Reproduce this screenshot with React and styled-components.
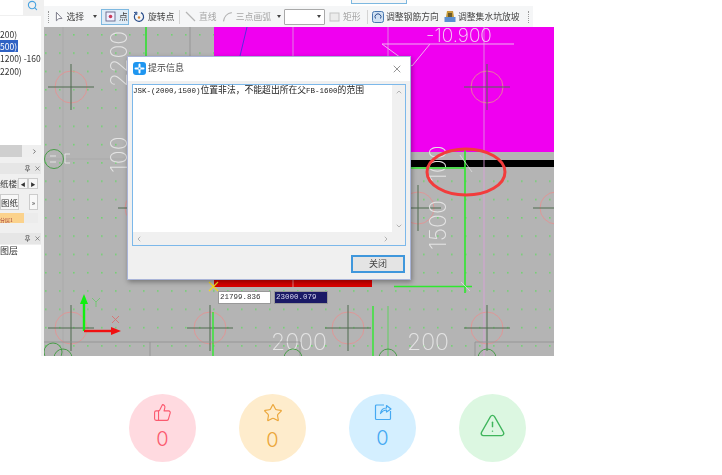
import React from 'react';
import styled, { createGlobalStyle } from 'styled-components';
import { ThumbsUp, Star, TriangleAlert, X, ChevronUp, ChevronDown, ChevronLeft, ChevronRight, Search, Pin } from 'lucide-react';

const GlobalStyle = createGlobalStyle`
  html, body { margin: 0; padding: 0; background: #fff; }
  body { font-family: "Noto Sans CJK SC", "Liberation Sans", sans-serif; }
`;

const Page = styled.div`
  width: 722px;
  height: 475px;
  overflow: hidden;
`;

const Shot = styled.div`
  width: 554px;
  height: 356px;
  display: flex;
  overflow: hidden;
  background: #f0f0f0;
  filter: blur(0.45px);
`;

/* left dock */
const Sidebar = styled.div`
  width: 44px;
  flex: none;
  display: flex;
  flex-direction: column;
  font-size: 9px;
  color: #333;
  overflow: hidden;
`;

const SearchRow = styled.div`
  height: 16px;
  display: flex;
  align-items: flex-start;
  color: #4aa3e0;
`;

const SearchBox = styled.div`
  width: 23px;
  height: 15px;
  background: #fff;
  margin-right: 4px;
`;

const TreeList = styled.div`
  width: 41px;
  height: 141px;
  background: #fff;
  padding-top: 12px;
  box-sizing: border-box;
  position: relative;
`;

const TreeItem = styled.div`
  height: 12.2px;
  line-height: 12px;
  white-space: nowrap;
  overflow: hidden;
  font-size: 8.5px;
`;

const TreeLabel = styled.span`
  display: inline-block;
  background: ${(p) => (p.$selected ? '#2f62c4' : 'transparent')};
  color: ${(p) => (p.$selected ? '#fff' : '#333')};
  padding-right: 1px;
`;

const TreeScroll = styled.div`
  position: absolute;
  left: 0;
  right: 0;
  bottom: 0;
  height: 12px;
  background: linear-gradient(to right, #cfcfcf 0 22px, #efefef 22px);
  display: flex;
  justify-content: flex-end;
  align-items: center;
  color: #666;
  padding-right: 3px;
`;

const DockHeader = styled.div`
  height: 11px;
  margin-top: ${(p) => p.$top}px;
  width: 41px;
  display: flex;
  justify-content: flex-end;
  align-items: center;
  gap: 3px;
  background: #e6e6e6;
  color: #555;
`;

const TabRow = styled.div`
  display: flex;
  align-items: center;
  width: 41px;
  height: 12px;
  margin-top: 3px;
  white-space: nowrap;
  font-size: 8.5px;
`;

const TabLabel = styled.span`
  width: 18px;
  overflow: hidden;
  flex: none;
`;

const ArrowBtn = styled.span`
  width: 10px;
  height: 11px;
  background: #f6f6f6;
  border: 1px solid #ccc;
  box-sizing: border-box;
  font-size: 5px;
  line-height: 9px;
  text-align: center;
`;

const SheetRow = styled.div`
  display: flex;
  justify-content: space-between;
  width: 38px;
  height: 16px;
  margin-top: 5px;
`;

const SheetBtn = styled.span`
  width: ${(p) => p.$w}px;
  height: 16px;
  line-height: 15px;
  background: #f8f8f8;
  border: 1px solid #ccc;
  box-sizing: border-box;
  font-size: ${(p) => p.$size || 8.5}px;
  text-align: center;
  overflow: hidden;
`;

const SheetBar = styled.div`
  width: 38px;
  height: 10px;
  margin-top: 3px;
  background: linear-gradient(to right, #fbd28c 0 24px, #ececec 24px);
  color: #a23a3a;
  font-size: 5px;
  line-height: 14px;
  overflow: hidden;
  white-space: nowrap;
`;

const LayerPanel = styled.div`
  flex: 1;
  width: 41px;
  background: #fff;
  margin-top: 1px;
  font-size: 9px;
  line-height: 12px;
`;

/* right side */
const Main = styled.div`
  flex: 1;
  display: flex;
  flex-direction: column;
  min-width: 0;
`;

const TopStrip = styled.div`
  height: 6px;
  display: flex;
  justify-content: flex-end;
  background: #fff;
  padding-right: 147px;
`;

const StripTab = styled.div`
  width: 54px;
  height: 3px;
  border: 1px solid #7db8e0;
  border-top: none;
  background: #f6f6f6;
`;

const Toolbar = styled.div`
  height: 21px;
  display: flex;
  align-items: center;
  background: #f5f6f7;
  font-size: 8.8px;
  color: #444;
  white-space: nowrap;
`;

const Grip = styled.span`
  width: 1px;
  height: 12px;
  margin: ${(p) => p.$margin || '0'};
  border-left: 1px dotted #999;
`;

const ToolbarEnd = styled.span`
  flex: 1;
  align-self: stretch;
  margin-left: 3px;
  background: #fff;
`;

const ToolItem = styled.div`
  display: flex;
  align-items: center;
  gap: ${(p) => p.$gap ?? 3}px;
  width: ${(p) => p.$w}px;
  margin-left: ${(p) => p.$left || 0}px;
  flex: none;
  color: ${(p) => (p.$dim ? '#a6a6a6' : '#444')};
`;

const ActiveTool = styled(ToolItem)`
  height: 16px;
  box-sizing: border-box;
  border: 1px solid #7db8e0;
  background: #dfecf7;
  padding-left: 3px;
`;

const Caret = styled.span`
  width: 0;
  height: 0;
  border-left: 2.5px solid transparent;
  border-right: 2.5px solid transparent;
  border-top: 3px solid #444;
  margin: ${(p) => p.$margin};
`;

const Separator = styled.span`
  width: 1px;
  height: 14px;
  background: #d4d4d4;
  margin: ${(p) => p.$margin};
`;

const ComboBox = styled.div`
  width: 41px;
  height: 16px;
  box-sizing: border-box;
  border: 1px solid #a9a9a9;
  border-radius: 1px;
  background: #fff;
  display: flex;
  justify-content: flex-end;
  align-items: center;
  padding-right: 3px;
  margin-right: 4px;
  flex: none;
`;

const Canvas = styled.div`
  position: relative;
  flex: 1;
  background: #b4b4b4;
  overflow: hidden;
`;

const Drawing = styled.svg`
  display: block;
  width: 510px;
  height: 329px;
`;

const CoordBox = styled.div`
  position: absolute;
  top: 264px;
  left: ${(p) => p.$left}px;
  width: ${(p) => p.$w}px;
  height: 13px;
  box-sizing: border-box;
  background: ${(p) => (p.$dark ? '#1a1a66' : '#fff')};
  color: ${(p) => (p.$dark ? '#d8d8f0' : '#333')};
  border: 1px solid #999;
  font-family: "Liberation Mono", monospace;
  font-size: 7.5px;
  line-height: 11px;
  padding-left: 1px;
  overflow: hidden;
`;

/* message dialog */
const Dialog = styled.div`
  position: absolute;
  left: 83px;
  top: 29px;
  width: 284px;
  height: 224px;
  box-sizing: border-box;
  background: #f0f0f0;
  border: 1px solid #a9b4d8;
  box-shadow: 1px 2px 5px rgba(0, 0, 0, 0.35);
  display: flex;
  flex-direction: column;
`;

const TitleBar = styled.div`
  height: 24px;
  flex: none;
  background: #fff;
  display: flex;
  align-items: center;
  padding: 0 7px 1px 5px;
  box-sizing: border-box;
  gap: 2px;
  font-size: 9px;
  color: #444;
`;

const TitleText = styled.span`
  flex: 1;
  line-height: 11px;
  margin-bottom: 2px;
`;

const MessageBox = styled.div`
  margin: 3px 4px 0 4px;
  height: 162px;
  flex: none;
  box-sizing: border-box;
  border: 1px solid #7cb8ea;
  background: #fff;
  display: grid;
  grid-template-columns: 1fr 13px;
  grid-template-rows: 1fr 13px;
`;

const MessageText = styled.div`
  font-size: 8.8px;
  line-height: 10px;
  color: #222;
  white-space: nowrap;
`;

const Latin = styled.span`
  font-family: "Liberation Mono", monospace;
  font-size: 7.5px;
`;

const VScroll = styled.div`
  background: #f0f0f0;
  color: #a6a6a6;
  display: flex;
  flex-direction: column;
  justify-content: space-between;
  align-items: center;
  padding: 3px 0 2px;
`;

const HScroll = styled.div`
  background: #f0f0f0;
  color: #a6a6a6;
  display: flex;
  justify-content: space-between;
  align-items: center;
  padding: 0 2px;
`;

const Corner = styled.div`
  background: #f0f0f0;
`;

const DialogFooter = styled.div`
  flex: 1;
  display: flex;
  justify-content: flex-end;
  align-items: flex-start;
  padding: 9px 5px 0 0;
`;

const CloseButton = styled.div`
  width: 54px;
  height: 18px;
  box-sizing: border-box;
  border: 2px solid #3f97dc;
  background: #e4e4e4;
  font-size: 9px;
  line-height: 14px;
  text-align: center;
  color: #444;
`;

/* reaction buttons under the picture */
const Reactions = styled.div`
  display: flex;
  gap: 43px;
  padding: 38px 0 0 129px;
`;

const Bubble = styled.div`
  width: 67px;
  height: 68px;
  border-radius: 50%;
  background: ${(p) => p.$bg};
  color: ${(p) => p.$fg};
  display: flex;
  flex-direction: column;
  align-items: center;
  justify-content: ${(p) => (p.$single ? 'center' : 'flex-start')};
  padding: ${(p) => (p.$single ? '0 0 6px' : '9px 0 0')};
  box-sizing: border-box;
`;

const Count = styled.span`
  font-family: Inter, "Liberation Sans", sans-serif;
  font-weight: 300;
  font-size: 20px;
  line-height: 24px;
  margin-top: 5px;
`;

const crosshairs = [
  [71, 87], [487, 87], [141, 208], [418, 208], [556, 208],
  [71, 328], [210, 328], [348, 328], [487, 328],
];

const Crosshair = ({ x, y }) => (
  <g fill="none">
    <circle cx={x} cy={y} r="16" stroke="#e88f8f" strokeWidth="0.8" />
    <path d={`M${x - 23} ${y}H${x + 23}M${x} ${y - 23}V${y + 23}`} stroke="#4f6a4f" strokeWidth="1" />
  </g>
);

const DimText = ({ x, y, size = 23, rotate, children }) => (
  <text
    x={x}
    y={y}
    fontFamily="Inter, sans-serif"
    fontWeight="200"
    fontSize={size}
    fill="#e4e4e4"
    transform={rotate ? `rotate(-90 ${x} ${y})` : undefined}
  >
    {children}
  </text>
);

const CadDrawing = () => (
  <Drawing viewBox="44 27 510 329">
    <defs>
      <pattern id="dots" x="45" y="34" width="14" height="18.3" patternUnits="userSpaceOnUse">
        <rect width="1.6" height="1.6" fill="#72d272" />
      </pattern>
    </defs>
    <rect x="44" y="27" width="510" height="329" fill="url(#dots)" />
    <rect x="214" y="27" width="340" height="125" fill="#f000f0" />
    <rect x="410" y="160" width="144" height="7" fill="#000" />
    <path d="M247 27L240 56" stroke="#5a2ae0" strokeWidth="1" />
    <path d="M146 27V56" stroke="#30e030" strokeWidth="1.6" />
    <path d="M190 27V56" stroke="#8f8f8f" strokeWidth="0.8" />
    <path d="M63 27V356M44 159H130" stroke="#a8a8a8" strokeWidth="0.7" />
    <path d="M293 27V152M388 27V152M484 27V356" stroke="#e0a0e0" strokeWidth="0.8" />
    <path d="M382 44H514M382 44L412 66L430 44" stroke="#f0b0f0" strokeWidth="1" fill="none" />
    {crosshairs.map(([x, y]) => (
      <Crosshair key={`${x}-${y}`} x={x} y={y} />
    ))}
    <text x="426" y="42" fontFamily="Inter, sans-serif" fontWeight="200" fontSize="19" fill="#f6d8f6">
      -10.900
    </text>
    <DimText x={127} y={87} rotate>2200</DimText>
    <DimText x={127} y={173} rotate>100</DimText>
    <DimText x={446} y={250} rotate>1500</DimText>
    <DimText x={446} y={182} rotate>100</DimText>
    <DimText x={271} y={350}>2000</DimText>
    <DimText x={407} y={350}>200</DimText>
    <path d="M465 150V293M394 286.5H472M411 168H465" stroke="#2fe82f" strokeWidth="1.6" fill="none" />
    <path d="M460 155L472 172M461 282L470 291" stroke="#e0e0e0" strokeWidth="0.8" />
    <ellipse cx="466" cy="172" rx="39" ry="23" fill="none" stroke="#f23c3c" strokeWidth="3" />
    <rect x="214" y="280" width="158" height="7" fill="#d80000" />
    <path d="M293 280V287" stroke="#e8a0a0" strokeWidth="0.8" />
    <path d="M209 282L218 291M218 282L209 291" stroke="#f0d820" strokeWidth="1.2" />
    <path d="M373 306V356M213 312V356" stroke="#2fe82f" strokeWidth="1.4" />
    <path d="M388 306V356" stroke="#4bd84b" strokeWidth="0.8" />
    <path d="M44 342H300V356M150 342V356M475 356V342H554" stroke="#8f8f8f" strokeWidth="0.8" fill="none" />
    <path d="M84 331V302" stroke="#10f010" strokeWidth="2.4" />
    <path d="M84 294L80 304H88Z" fill="#10f010" />
    <path d="M84 331H113" stroke="#f01010" strokeWidth="2.4" />
    <path d="M121 331L111 327V335Z" fill="#f01010" />
    <path d="M92 298L96 302L100 298M96 302V307" stroke="#6fc86f" strokeWidth="0.9" fill="none" />
    <path d="M112 316L119 323M119 316L112 323" stroke="#d87070" strokeWidth="0.9" />
    <g fill="none" stroke="#3d9a3d" strokeWidth="0.9">
      <circle cx="54" cy="159" r="9.5" />
      <circle cx="53" cy="352" r="9" />
      <circle cx="63" cy="358" r="9" />
      <circle cx="293" cy="358" r="9" />
      <circle cx="388" cy="358" r="9" />
      <circle cx="487" cy="358" r="9" />
    </g>
    <path d="M50 156H56M50 162H56M65 154H70M65 163H70M65 154V163" stroke="#e8e8e8" strokeWidth="0.9" fill="none" />
  </Drawing>
);

const CursorIcon = () => (
  <svg width="9" height="12" viewBox="0 0 9 12">
    <path d="M1.5 1L1.5 10L4 7.8L7.5 7.5Z" fill="#fff" stroke="#667" strokeWidth="0.9" />
  </svg>
);

const PointIcon = () => (
  <svg width="11" height="11" viewBox="0 0 11 11">
    <rect x="1" y="1" width="9" height="9" fill="#eef" stroke="#668" strokeWidth="0.9" />
    <circle cx="5.5" cy="5.5" r="1.8" fill="#c83a5a" />
  </svg>
);

const RotateIcon = () => (
  <svg width="12" height="12" viewBox="0 0 12 12" fill="none">
    <path d="M3 2.2A4.6 4.6 0 1 0 8 1.6" stroke="#2b4f8c" strokeWidth="1.2" />
    <path d="M1 1.5L4 1.2L3.6 4" stroke="#2b4f8c" strokeWidth="1" />
    <circle cx="6" cy="6.5" r="1.2" fill="#d08030" />
  </svg>
);

const LineIcon = () => (
  <svg width="11" height="11" viewBox="0 0 11 11">
    <path d="M1 1L10 10" stroke="#b5b5b5" strokeWidth="1.2" />
  </svg>
);

const ArcIcon = () => (
  <svg width="11" height="11" viewBox="0 0 11 11" fill="none">
    <path d="M1.5 10.5C2 6 5 2 10 1.5" stroke="#b5b5b5" strokeWidth="1.2" />
  </svg>
);

const RectIcon = () => (
  <svg width="11" height="10" viewBox="0 0 11 10">
    <rect x="1" y="1" width="9" height="8" fill="#ececec" stroke="#c4c4c4" />
  </svg>
);

const RebarIcon = () => (
  <svg width="12" height="13" viewBox="0 0 12 13">
    <rect x="0.5" y="1.5" width="11" height="11" rx="2" fill="#cfe0f2" stroke="#4a78b0" />
    <path d="M3.500 8.500A3 3 0 1 1 8.500 8.500" stroke="#2b4f8c" strokeWidth="1" fill="none" />
  </svg>
);

const PitIcon = () => (
  <svg width="12" height="13" viewBox="0 0 12 13">
    <path d="M3 1H9L10 7H2Z" fill="#c89b3a" />
    <path d="M0.5 7H11.5V12H0.5Z" fill="#5c8fd0" />
    <path d="M4 3H8V7H4Z" fill="#6a5a2a" />
  </svg>
);

const DialogLogo = () => (
  <svg width="13" height="13" viewBox="0 0 13 13">
    <rect width="13" height="13" rx="3" fill="#1f96f0" />
    <path d="M6.5 2.5V10.5M2.5 6.5H10.5" stroke="#fff" strokeWidth="2" strokeLinecap="round" />
    <circle cx="6.5" cy="6.5" r="1" fill="#1f96f0" />
  </svg>
);

const ShareIcon = () => (
  <svg width="18" height="18" viewBox="0 0 18 18" fill="none" stroke="currentColor" strokeWidth="1.2" strokeLinejoin="round">
    <path d="M10 2H2.5A1 1 0 0 0 1.500 3V15.500A1 1 0 0 0 2.500 16.500H15.500A1 1 0 0 0 16.500 15.500V8" />
    <path d="M6.500 10.500C7 7 9.500 5 12.500 5V2.500L17 6L12.500 9V7C10 7 8 8.500 6.500 10.500Z" />
  </svg>
);

const DockButtons = () => (
  <>
    <Pin size={7} strokeWidth={2.5} />
    <X size={7} strokeWidth={2} />
  </>
);

export default function App() {
  return (
    <Page>
      <GlobalStyle />
      <Shot>
        <Sidebar>
          <SearchRow>
            <SearchBox />
            <Search size={11} strokeWidth={2.4} />
          </SearchRow>
          <TreeList>
            <TreeItem>200)</TreeItem>
            <TreeItem><TreeLabel $selected>500)</TreeLabel></TreeItem>
            <TreeItem>1200) -160</TreeItem>
            <TreeItem>2200)</TreeItem>
            <TreeScroll><ChevronRight size={7} strokeWidth={3} /></TreeScroll>
          </TreeList>
          <DockHeader $top={6}><DockButtons /></DockHeader>
          <TabRow>
            <TabLabel>纸楼|</TabLabel>
            <ArrowBtn>◀</ArrowBtn>
            <ArrowBtn>▶</ArrowBtn>
          </TabRow>
          <SheetRow>
            <SheetBtn $w={19}>图纸</SheetBtn>
            <SheetBtn $w={9} $size={7}>»</SheetBtn>
          </SheetRow>
          <SheetBar>分层1</SheetBar>
          <DockHeader $top={10}><DockButtons /></DockHeader>
          <LayerPanel>图层</LayerPanel>
        </Sidebar>
        <Main>
          <TopStrip><StripTab /></TopStrip>
          <Toolbar>
            <Grip $margin="0 5px 0 4px" />
            <ToolItem $w={42}><CursorIcon />选择<Caret $margin="0 0 0 6px" /></ToolItem>
            <ActiveTool $w={28} $left={4}><PointIcon />点</ActiveTool>
            <ToolItem $w={46} $left={4}><RotateIcon />旋转点</ToolItem>
            <Separator $margin="0 5px 0 0" />
            <ToolItem $w={37} $dim><LineIcon />直线</ToolItem>
            <ToolItem $w={49} $dim><ArcIcon />三点画弧</ToolItem>
            <Caret $margin="0 3px 0 6px" />
            <ComboBox><Caret $margin="0" /></ComboBox>
            <ToolItem $w={38} $dim><RectIcon />矩形</ToolItem>
            <Separator $margin="0 4px 0 0" />
            <ToolItem $w={72} $gap={2}><RebarIcon />调整钢筋方向</ToolItem>
            <ToolItem $w={84} $gap={2}><PitIcon />调整集水坑放坡</ToolItem>
            <Grip />
            <ToolbarEnd />
          </Toolbar>
          <Canvas>
            <CadDrawing />
            <CoordBox $left={174} $w={53}>21799.836</CoordBox>
            <CoordBox $left={230} $w={54} $dark>23000.079</CoordBox>
            <Dialog>
              <TitleBar>
                <DialogLogo />
                <TitleText>提示信息</TitleText>
                <X size={12} color="#666" strokeWidth={1.4} />
              </TitleBar>
              <MessageBox>
                <MessageText>
                  <Latin>JSK-(2000,1500)</Latin>位置非法，不能超出所在父<Latin>FB-1600</Latin>的范围
                </MessageText>
                <VScroll>
                  <ChevronUp size={8} strokeWidth={2.5} />
                  <ChevronDown size={8} strokeWidth={2.5} />
                </VScroll>
                <HScroll>
                  <ChevronLeft size={8} strokeWidth={2.5} />
                  <ChevronRight size={8} strokeWidth={2.5} />
                </HScroll>
                <Corner />
              </MessageBox>
              <DialogFooter>
                <CloseButton>关闭</CloseButton>
              </DialogFooter>
            </Dialog>
          </Canvas>
        </Main>
      </Shot>
      <Reactions>
        <Bubble $bg="#ffdae0" $fg="#fb5a6f">
          <ThumbsUp size={19} strokeWidth={1.4} />
          <Count>0</Count>
        </Bubble>
        <Bubble $bg="#feeccc" $fg="#eba63a">
          <Star size={20} strokeWidth={1.4} />
          <Count>0</Count>
        </Bubble>
        <Bubble $bg="#d4efff" $fg="#45a9f2">
          <ShareIcon />
          <Count>0</Count>
        </Bubble>
        <Bubble $bg="#dcf7e1" $fg="#3fb55c" $single>
          <TriangleAlert size={27} strokeWidth={1.3} />
        </Bubble>
      </Reactions>
    </Page>
  );
}
